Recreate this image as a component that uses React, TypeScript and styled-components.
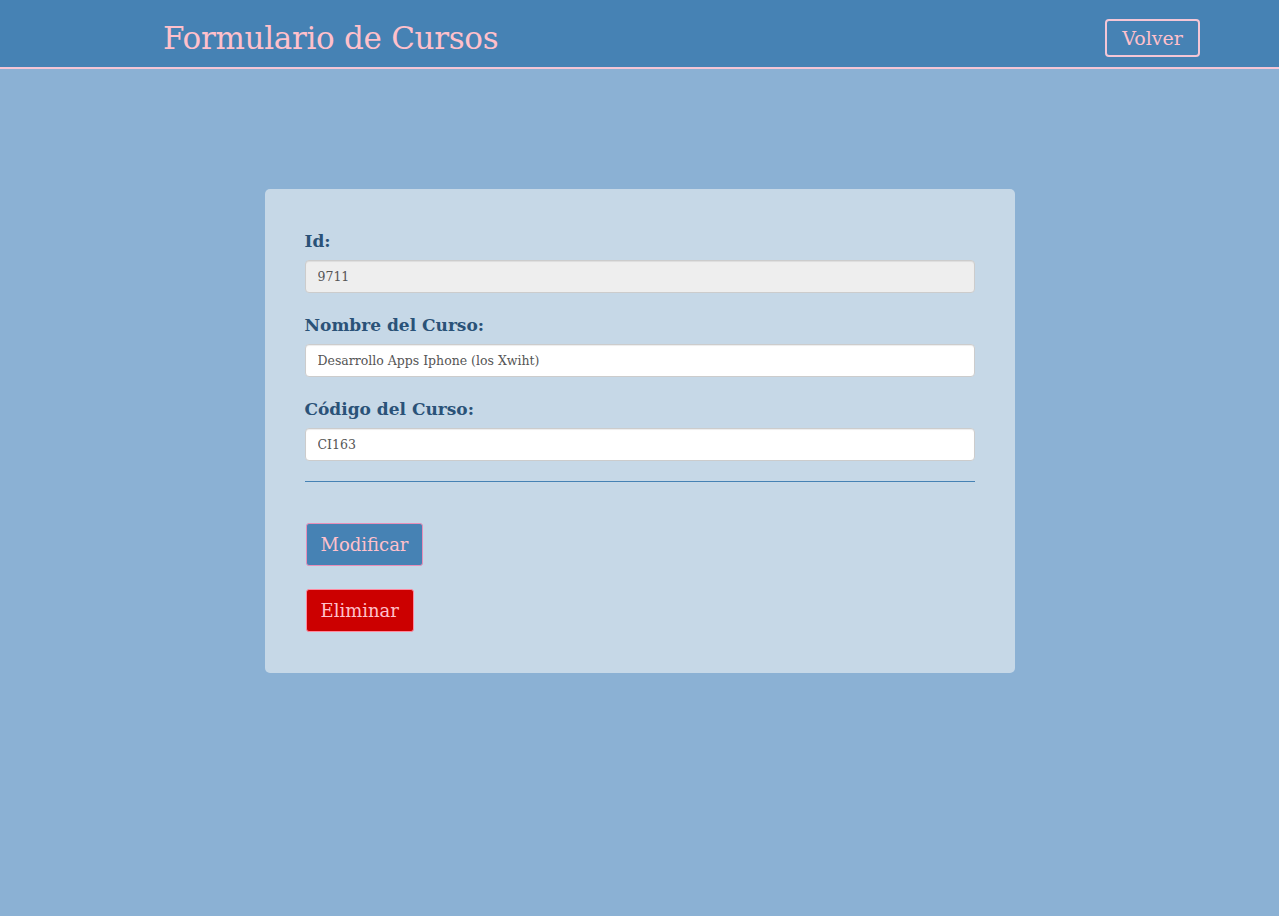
import React from "react";
import styled, { createGlobalStyle } from "styled-components";

const Global = createGlobalStyle`
  html, body { margin: 0; padding: 0; }
  body {
    background: #8bb1d4;
    font-family: "DejaVu Serif", "Liberation Serif", serif;
    min-height: 916px;
  }
`;

const Header = styled.header`
  height: 69px;
  box-sizing: border-box;
  background: #4682b4;
  border-bottom: 2px solid #f4c6d6;
  display: flex;
  align-items: center;
  justify-content: space-between;
  padding: 8px 79px 0 163px;
`;

const Title = styled.h1`
  margin: 0;
  font-family: "DejaVu Serif", serif;
  font-weight: normal;
  font-size: 31px;
  color: #ffc0cb;
  letter-spacing: -0.3px;
`;

const BackButton = styled.button`
  width: 95px;
  height: 38px;
  background: transparent;
  border: 2px solid #f4c6d6;
  border-radius: 4px;
  color: #ffc0cb;
  font-family: "DejaVu Serif", serif;
  font-size: 19px;
  padding: 0;
  cursor: pointer;
`;

const Card = styled.form`
  width: 750px;
  box-sizing: border-box;
  margin: 120px auto 0;
  background: #c6d8e7;
  border-radius: 5px;
  padding: 42px 40px 41px;
  display: flex;
  flex-direction: column;
`;

const Field = styled.div`
  display: flex;
  flex-direction: column;
  margin-bottom: 22px;
`;

const Label = styled.label`
  font-family: "DejaVu Serif", serif;
  font-weight: bold;
  font-size: 17px;
  line-height: 20px;
  color: #2a5278;
  margin-bottom: 9px;
`;

const Input = styled.input<{ $readOnly?: boolean }>`
  height: 33px;
  box-sizing: border-box;
  border: 1px solid #cccccc;
  border-radius: 4px;
  background: ${(p) => (p.$readOnly ? "#eeeeee" : "#ffffff")};
  padding: 0 12px;
  font-family: "DejaVu Serif", serif;
  font-size: 12.5px;
  color: #555555;
  box-shadow: inset 0 1px 1px rgba(0, 0, 0, 0.075);
  outline: none;
`;

const Divider = styled.hr`
  border: 0;
  border-top: 1px solid #4682b4;
  margin: -2px 0 41px;
`;

const ActionButton = styled.button<{ $variant: "primary" | "danger" }>`
  align-self: flex-start;
  margin-left: 1px;
  height: 43px;
  padding: 0 14px;
  border-radius: 3px;
  border: 1px solid ${(p) => (p.$variant === "primary" ? "#e88fb8" : "#ff8aa0")};
  background: ${(p) => (p.$variant === "primary" ? "#4682b4" : "#cc0000")};
  color: #ffc0cb;
  font-family: "DejaVu Serif", serif;
  font-size: 18px;
  cursor: pointer;
  & + & {
    margin-top: 23px;
  }
`;

export default function App() {
  return (
    <>
      <Global />
      <Header>
        <Title>Formulario de Cursos</Title>
        <BackButton type="button">Volver</BackButton>
      </Header>
      <Card onSubmit={(e) => e.preventDefault()}>
        <Field>
          <Label>Id:</Label>
          <Input $readOnly readOnly value="9711" />
        </Field>
        <Field>
          <Label>Nombre del Curso:</Label>
          <Input defaultValue="Desarrollo Apps Iphone (los Xwiht)" />
        </Field>
        <Field>
          <Label>Código del Curso:</Label>
          <Input defaultValue="CI163" />
        </Field>
        <Divider />
        <ActionButton $variant="primary" type="button">Modificar</ActionButton>
        <ActionButton $variant="danger" type="button">Eliminar</ActionButton>
      </Card>
    </>
  );
}
